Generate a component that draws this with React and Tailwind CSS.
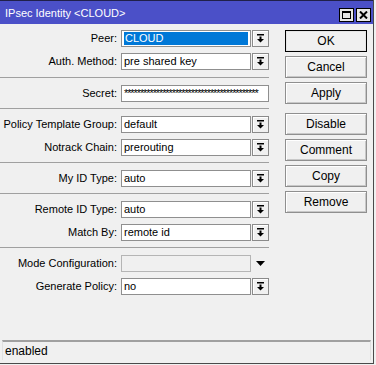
import React from 'react';

const font = { fontFamily: '"Liberation Sans", Arial, sans-serif' };

const DropIcon = () => (
  <svg width="9" height="9" viewBox="0 0 9 9">
    <rect x="1" y="0" width="7" height="1.5" fill="#000" />
    <rect x="3.5" y="2.5" width="2" height="2.5" fill="#000" />
    <polygon points="1,5 8,5 4.5,8.5" fill="#000" />
  </svg>
);

const DropButton = () => (
  <div className="w-[17px] h-[17px] ml-[1px] border border-[#8a8a8a] bg-[#f0f0f0] flex items-center justify-center shadow-[inset_1px_1px_0_#ffffff]">
    <DropIcon />
  </div>
);

const Row = ({ label, value, selected, drop = true, disabled, wide, plainArrow }) => (
  <div className="h-[23px] flex items-center">
    <div className="w-[118px] text-right text-[11px] text-black pr-[1px] whitespace-nowrap">{label}</div>
    <div
      className={`ml-[3px] h-[17px] border border-[#8f8f8f] flex items-center px-[2px] overflow-hidden whitespace-nowrap text-[11px] ${
        wide ? 'w-[148px]' : 'w-[130px]'
      } ${disabled ? 'bg-[#f0f0f0] border-[#b5b5b5]' : 'bg-white'}`}
    >
      {selected ? (
        <span className="bg-[#0078d7] text-white w-full h-[13px] leading-[13px] pl-[1px]">{value}</span>
      ) : (
        <span className="text-black">{value}</span>
      )}
    </div>
    {drop && <DropButton />}
    {plainArrow && (
      <div className="w-[17px] h-[17px] ml-[1px] flex items-center justify-center">
        <svg width="9" height="6" viewBox="0 0 9 6">
          <polygon points="0,0 9,0 4.5,5" fill="#000" />
        </svg>
      </div>
    )}
  </div>
);

const Sep = () => <div className="w-[269px] h-0 border-t border-[#a0a0a0]" />;

const Btn = ({ children, primary, className = '' }) => (
  <div
    className={`w-[82px] h-[22px] flex items-center justify-center text-[12px] text-black bg-[#f0f0f0] border ${
      primary ? 'border-black shadow-[inset_0_0_0_1px_#e5e5e5]' : 'border-[#8f8f8f] shadow-[inset_1px_1px_0_#ffffff,inset_-1px_-1px_0_#c8c8c8]'
    } ${className}`}
  >
    {children}
  </div>
);

export default function App() {
  const secret = '*'.repeat(42);
  return (
    <div className="w-[376px] h-[365px] bg-[#f0f0f0] overflow-hidden" style={font}>
      <div className="w-[374px] h-[364px] flex flex-col border-r border-b border-[#4a4a4a] bg-[#f0f0f0]">
        {/* title bar */}
        <div className="h-[24px] border-t border-[#20204a] bg-[#4b50c8] flex items-center pl-[5px] pr-[2px] shrink-0">
          <span className="text-white text-[11px] flex-1 mt-[2px]">IPsec Identity &lt;CLOUD&gt;</span>
          <div className="flex gap-[2px] mt-[4px]">
            <div className="w-[15px] h-[14px] bg-[#e8e8e8] border border-black flex items-center justify-center">
              <div className="w-[9px] h-[8px] border border-black border-t-2" />
            </div>
            <div className="w-[15px] h-[14px] bg-[#e8e8e8] border border-black flex items-center justify-center">
              <svg width="9" height="8" viewBox="0 0 9 8">
                <path d="M1 0.5 L8 7.5 M8 0.5 L1 7.5" stroke="#000" strokeWidth="2" />
              </svg>
            </div>
          </div>
        </div>

        <div className="flex flex-1">
          {/* form */}
          <div className="w-[285px] flex flex-col">
            <div className="pt-[3px] pb-[4px]">
              <Row label="Peer:" value="CLOUD" selected />
              <Row label="Auth. Method:" value="pre shared key" />
            </div>
            <Sep />
            <div className="pt-[4px] pb-[3px]">
              <Row label="Secret:" value={<span className="tracking-[-1.1px]">{secret}</span>} drop={false} wide />
            </div>
            <Sep />
            <div className="pt-[4px] pb-[3px]">
              <Row label="Policy Template Group:" value="default" />
              <Row label="Notrack Chain:" value="prerouting" />
            </div>
            <Sep />
            <div className="pt-[4px] pb-[3px]">
              <Row label="My ID Type:" value="auto" />
            </div>
            <Sep />
            <div className="pt-[4px] pb-[3px]">
              <Row label="Remote ID Type:" value="auto" />
              <Row label="Match By:" value="remote id" />
            </div>
            <Sep />
            <div className="pt-[4px] pb-[3px]">
              <Row label="Mode Configuration:" value="" drop={false} disabled plainArrow />
              <Row label="Generate Policy:" value="no" />
            </div>
          </div>

          {/* buttons */}
          <div className="flex flex-col gap-[4px] pt-[6px]">
            <Btn primary>OK</Btn>
            <Btn>Cancel</Btn>
            <Btn>Apply</Btn>
            <Btn className="mt-[5px]">Disable</Btn>
            <Btn>Comment</Btn>
            <Btn>Copy</Btn>
            <Btn>Remove</Btn>
          </div>
        </div>

        {/* status bar */}
        <div className="mx-[2px] mb-[3px] h-[20px] border-t-2 border-[#a0a0a0] border-x border-x-[#e0e0e0] flex items-center pl-[2px] text-[12px] text-black shrink-0">
          enabled
        </div>
      </div>
    </div>
  );
}
